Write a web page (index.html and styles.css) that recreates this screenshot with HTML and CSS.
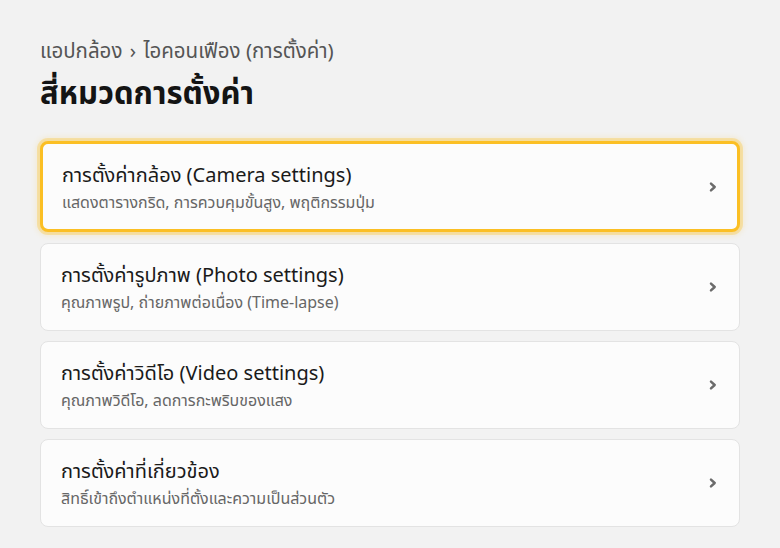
FILE: index.html
```html
<!DOCTYPE html>
<html lang="th">

<head>
    <meta charset="UTF-8">
    <meta name="viewport" content="width=device-width, initial-scale=1.0">
    <title>สี่หมวดการตั้งค่า</title>
    <link rel="stylesheet" href="styles.css">
</head>

<body>
    <div class="page">
        <div class="breadcrumb">แอปกล้อง <span class="sep">›</span> ไอคอนเฟือง (การตั้งค่า)</div>
        <h1>สี่หมวดการตั้งค่า</h1>

        <div class="list">
            <a class="item active" href="#">
                <div class="text">
                    <div class="title">การตั้งค่ากล้อง (Camera settings)</div>
                    <div class="desc">แสดงตารางกริด, การควบคุมขั้นสูง, พฤติกรรมปุ่ม</div>
                </div>
                <svg class="chevron" width="12" height="12" viewBox="0 0 12 12"><path d="M4 2.6 L7.7 6 L4 9.4" fill="none" stroke="#6b6b6b" stroke-width="2.5" stroke-linecap="round" stroke-linejoin="round"/></svg>
            </a>
            <a class="item" href="#">
                <div class="text">
                    <div class="title">การตั้งค่ารูปภาพ (Photo settings)</div>
                    <div class="desc">คุณภาพรูป, ถ่ายภาพต่อเนื่อง (Time-lapse)</div>
                </div>
                <svg class="chevron" width="12" height="12" viewBox="0 0 12 12"><path d="M4 2.6 L7.7 6 L4 9.4" fill="none" stroke="#6b6b6b" stroke-width="2.5" stroke-linecap="round" stroke-linejoin="round"/></svg>
            </a>
            <a class="item" href="#">
                <div class="text">
                    <div class="title">การตั้งค่าวิดีโอ (Video settings)</div>
                    <div class="desc">คุณภาพวิดีโอ, ลดการกะพริบของแสง</div>
                </div>
                <svg class="chevron" width="12" height="12" viewBox="0 0 12 12"><path d="M4 2.6 L7.7 6 L4 9.4" fill="none" stroke="#6b6b6b" stroke-width="2.5" stroke-linecap="round" stroke-linejoin="round"/></svg>
            </a>
            <a class="item" href="#">
                <div class="text">
                    <div class="title">การตั้งค่าที่เกี่ยวข้อง</div>
                    <div class="desc">สิทธิ์เข้าถึงตำแหน่งที่ตั้งและความเป็นส่วนตัว</div>
                </div>
                <svg class="chevron" width="12" height="12" viewBox="0 0 12 12"><path d="M4 2.6 L7.7 6 L4 9.4" fill="none" stroke="#6b6b6b" stroke-width="2.5" stroke-linecap="round" stroke-linejoin="round"/></svg>
            </a>
        </div>
    </div>
</body>

</html>
```

FILE: styles.css
```css
body {
    margin: 0;
    padding: 0;
    background-color: #f2f2f2;
    font-family: "Noto Sans", "Noto Sans Thai", sans-serif;
    color: #1a1a1a;
}

.page {
    padding: 35px 40px 20px;
}

.breadcrumb {
    font-size: 20.5px;
    color: #555;
    line-height: 30px;
}

.breadcrumb .sep {
    margin: 0 2px;
}

h1 {
    margin: 8px 0 30px;
    font-size: 31px;
    font-weight: 700;
    line-height: 38px;
    color: #141414;
}

.list {
    display: flex;
    flex-direction: column;
    gap: 10px;
}

.item {
    display: flex;
    align-items: center;
    justify-content: space-between;
    height: 88px;
    box-sizing: border-box;
    padding: 0 20px 0 20px;
    background-color: #fcfcfc;
    border: 1px solid #e3e3e3;
    border-radius: 8px;
    text-decoration: none;
    color: inherit;
}

.item.active {
    height: 91px;
    padding: 0 18px 0 19px;
    border: 3px solid #fbbf24;
    box-shadow: 0 0 0 3px rgba(251, 191, 36, 0.3), 0 0 6px 3px rgba(251, 191, 36, 0.2);
    margin-bottom: 1px;
}

.title {
    font-size: 20px;
    line-height: 28px;
    color: #1a1a1a;
}

.desc {
    margin-top: 2px;
    font-size: 16px;
    line-height: 22px;
    color: #666;
}

.chevron {
    flex-shrink: 0;
}
```
